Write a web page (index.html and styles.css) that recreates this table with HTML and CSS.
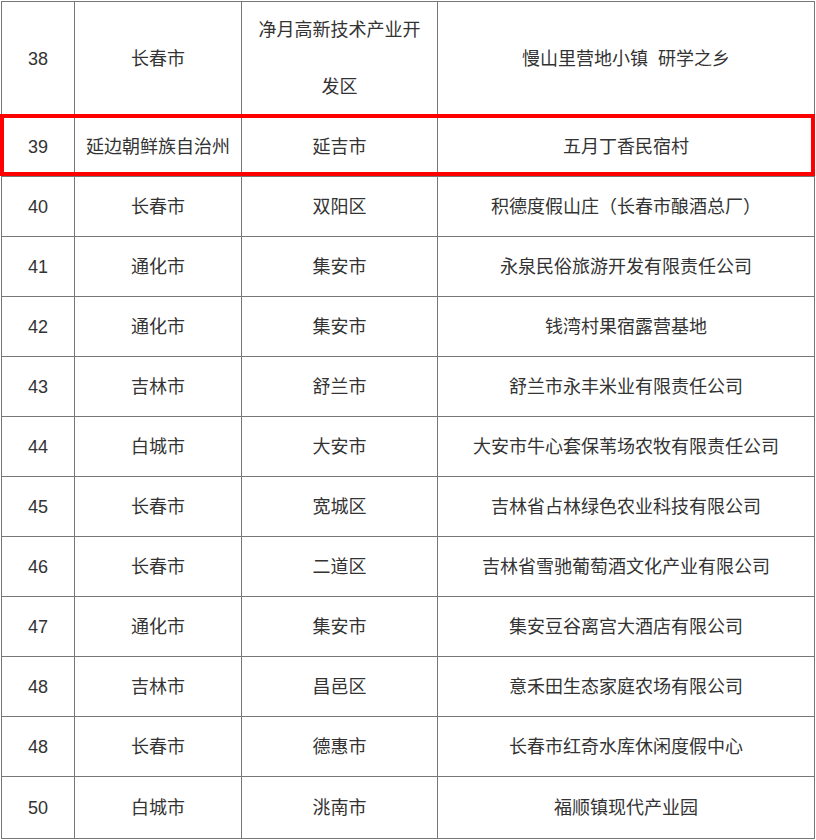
FILE: index.html
```html
<!DOCTYPE html>
<html lang="zh">
<head>
<meta charset="utf-8">
<link rel="stylesheet" href="styles.css">
</head>
<body>
<div class="wrap">
<table class="list">
  <colgroup>
    <col class="c1"><col class="c2"><col class="c3"><col class="c4">
  </colgroup>
  <tbody>
    <tr class="tall"><td>38</td><td>长春市</td><td class="two">净月高新技术产业开发区</td><td>慢山里营地小镇&nbsp;&nbsp;研学之乡</td></tr>
    <tr><td>39</td><td>延边朝鲜族自治州</td><td>延吉市</td><td>五月丁香民宿村</td></tr>
    <tr><td>40</td><td>长春市</td><td>双阳区</td><td>积德度假山庄（长春市酿酒总厂）</td></tr>
    <tr><td>41</td><td>通化市</td><td>集安市</td><td>永泉民俗旅游开发有限责任公司</td></tr>
    <tr><td>42</td><td>通化市</td><td>集安市</td><td>钱湾村果宿露营基地</td></tr>
    <tr><td>43</td><td>吉林市</td><td>舒兰市</td><td>舒兰市永丰米业有限责任公司</td></tr>
    <tr><td>44</td><td>白城市</td><td>大安市</td><td>大安市牛心套保苇场农牧有限责任公司</td></tr>
    <tr><td>45</td><td>长春市</td><td>宽城区</td><td>吉林省占林绿色农业科技有限公司</td></tr>
    <tr><td>46</td><td>长春市</td><td>二道区</td><td>吉林省雪驰葡萄酒文化产业有限公司</td></tr>
    <tr><td>47</td><td>通化市</td><td>集安市</td><td>集安豆谷离宫大酒店有限公司</td></tr>
    <tr><td>48</td><td>吉林市</td><td>昌邑区</td><td>意禾田生态家庭农场有限公司</td></tr>
    <tr><td>48</td><td>长春市</td><td>德惠市</td><td>长春市红奇水库休闲度假中心</td></tr>
    <tr class="last"><td>50</td><td>白城市</td><td>洮南市</td><td>福顺镇现代产业园</td></tr>
  </tbody>
</table>
<div class="highlight"></div>
</div>
</body>
</html>
```
FILE: styles.css
```css
html, body {
  margin: 0;
  padding: 0;
  background: #ffffff;
}
.wrap {
  position: relative;
  width: 816px;
  height: 840px;
  overflow: hidden;
}
.list {
  border-collapse: collapse;
  table-layout: fixed;
  width: 813px;
  margin: 1px 0 0 1px;
  font-family: "Liberation Sans", "Noto Sans CJK SC", sans-serif;
  font-size: 18px;
  color: #333333;
}
.c1 { width: 73px; }
.c2 { width: 167px; }
.c3 { width: 196px; }
.c4 { width: 377px; }
.list td {
  border: 1px solid #777777;
  height: 60px;
  padding: 0 8px;
  box-sizing: border-box;
  text-align: center;
  vertical-align: middle;
  line-height: 56px;
  white-space: nowrap;
}
.list td.two {
  white-space: normal;
  line-height: 57px;
}
.list tr.tall td {
  height: 115px;
}
.list tr.last td {
  height: 62px;
}
.highlight {
  position: absolute;
  left: 0;
  top: 114px;
  width: 815px;
  height: 62px;
  border: 4px solid #ff0000;
  box-sizing: border-box;
}
```
